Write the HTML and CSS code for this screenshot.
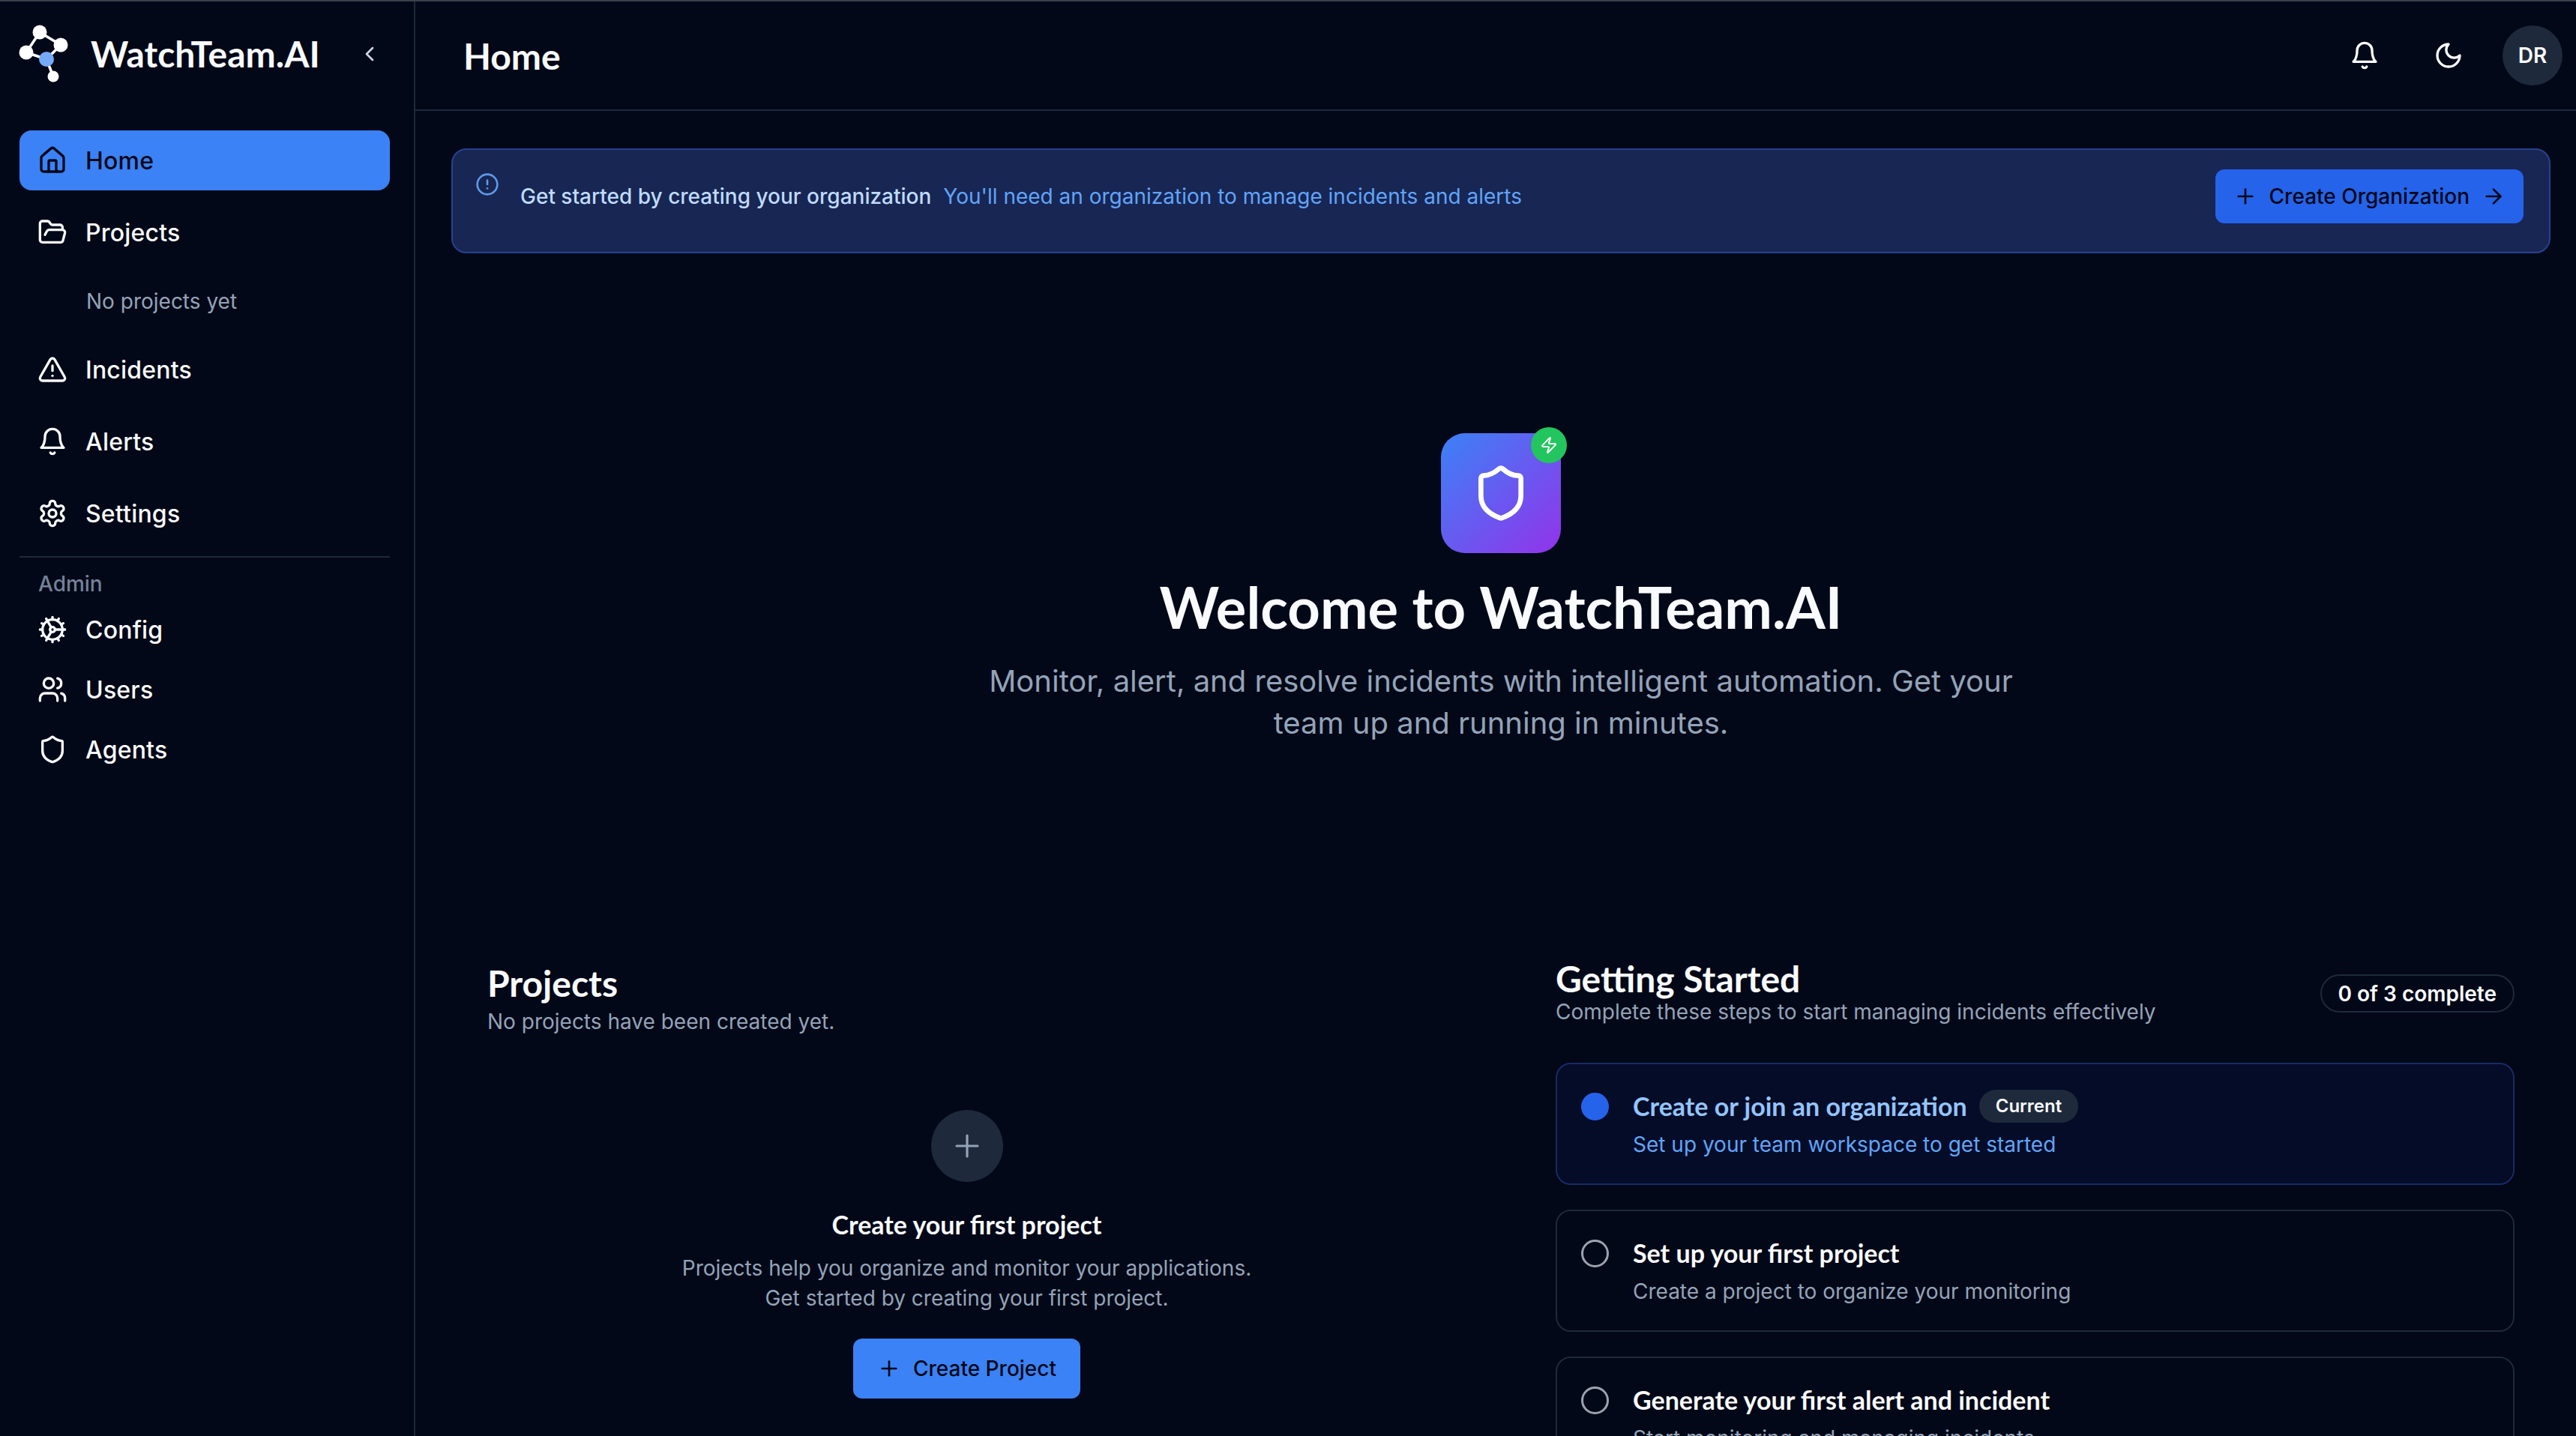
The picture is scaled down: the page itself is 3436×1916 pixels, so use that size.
FILE: index.html
```html
<!DOCTYPE html>
<html lang="en">
<head>
    <meta charset="UTF-8">
    <meta name="viewport" content="width=device-width, initial-scale=1.0">
    <title>WatchTeam.AI</title>
    <link rel="stylesheet" href="styles.css">
</head>
<body>
    <div class="app">
        <aside class="sidebar">
            <div class="brand">
                <svg class="logo" viewBox="0 0 100 130" width="100" height="130">
                    <g stroke="#fff" stroke-width="3.5">
                        <line x1="53" y1="43" x2="81" y2="60"/>
                        <line x1="53" y1="43" x2="35" y2="70"/>
                        <line x1="81" y1="60" x2="62" y2="79"/>
                        <line x1="35" y1="70" x2="62" y2="79"/>
                        <line x1="62" y1="79" x2="71" y2="102"/>
                    </g>
                    <circle cx="53" cy="43" r="9.5" fill="#fff"/>
                    <circle cx="81" cy="60" r="9.5" fill="#fff"/>
                    <circle cx="35" cy="70" r="9.5" fill="#fff"/>
                    <circle cx="71" cy="102" r="7.5" fill="#fff"/>
                    <circle cx="62" cy="79" r="10" fill="#76a9fa"/>
                </svg>
                <span class="brand-name">WatchTeam.AI</span>
                <svg class="icon collapse" viewBox="0 0 24 24"><path d="m15 18-6-6 6-6"/></svg>
            </div>
            <nav class="nav">
                <a class="nav-item active">
                    <svg class="icon" viewBox="0 0 24 24"><path d="M15 21v-8a1 1 0 0 0-1-1h-4a1 1 0 0 0-1 1v8"/><path d="M3 10a2 2 0 0 1 .709-1.528l7-5.999a2 2 0 0 1 2.582 0l7 5.999A2 2 0 0 1 21 10v9a2 2 0 0 1-2 2H5a2 2 0 0 1-2-2z"/></svg>
                    Home
                </a>
                <a class="nav-item">
                    <svg class="icon" viewBox="0 0 24 24"><path d="m6 14 1.5-2.9A2 2 0 0 1 9.24 10H20a2 2 0 0 1 1.94 2.5l-1.54 6a2 2 0 0 1-1.95 1.5H4a2 2 0 0 1-2-2V5a2 2 0 0 1 2-2h3.9a2 2 0 0 1 1.69.9l.81 1.2a2 2 0 0 0 1.67.9H18a2 2 0 0 1 2 2v2"/></svg>
                    Projects
                </a>
                <p class="nav-empty">No projects yet</p>
                <a class="nav-item">
                    <svg class="icon" viewBox="0 0 24 24"><path d="m21.73 18-8-14a2 2 0 0 0-3.48 0l-8 14A2 2 0 0 0 4 21h16a2 2 0 0 0 1.73-3"/><path d="M12 9v4"/><path d="M12 17h.01"/></svg>
                    Incidents
                </a>
                <a class="nav-item">
                    <svg class="icon" viewBox="0 0 24 24"><path d="M6 8a6 6 0 0 1 12 0c0 7 3 9 3 9H3s3-2 3-9"/><path d="M10.3 21a1.94 1.94 0 0 0 3.4 0"/></svg>
                    Alerts
                </a>
                <a class="nav-item">
                    <svg class="icon" viewBox="0 0 24 24"><path d="M12.22 2h-.44a2 2 0 0 0-2 2v.18a2 2 0 0 1-1 1.73l-.43.25a2 2 0 0 1-2 0l-.15-.08a2 2 0 0 0-2.73.73l-.22.38a2 2 0 0 0 .73 2.73l.15.1a2 2 0 0 1 1 1.72v.51a2 2 0 0 1-1 1.74l-.15.09a2 2 0 0 0-.73 2.73l.22.38a2 2 0 0 0 2.73.73l.15-.08a2 2 0 0 1 2 0l.43.25a2 2 0 0 1 1 1.73V20a2 2 0 0 0 2 2h.44a2 2 0 0 0 2-2v-.18a2 2 0 0 1 1-1.73l.43-.25a2 2 0 0 1 2 0l.15.08a2 2 0 0 0 2.73-.73l.22-.39a2 2 0 0 0-.73-2.73l-.15-.08a2 2 0 0 1-1-1.74v-.5a2 2 0 0 1 1-1.74l.15-.09a2 2 0 0 0 .73-2.73l-.22-.38a2 2 0 0 0-2.73-.73l-.15.08a2 2 0 0 1-2 0l-.43-.25a2 2 0 0 1-1-1.73V4a2 2 0 0 0-2-2z"/><circle cx="12" cy="12" r="3"/></svg>
                    Settings
                </a>
                <div class="nav-divider"></div>
                <p class="nav-label">Admin</p>
                <a class="nav-item tight">
                    <svg class="icon" viewBox="0 0 24 24"><path d="M12 20a8 8 0 1 0 0-16 8 8 0 0 0 0 16Z"/><path d="M12 14a2 2 0 1 0 0-4 2 2 0 0 0 0 4Z"/><path d="M12 2v2"/><path d="M12 22v-2"/><path d="m17 20.66-1-1.73"/><path d="M11 10.27 7 3.34"/><path d="m20.66 17-1.73-1"/><path d="m3.34 7 1.73 1"/><path d="M14 12h8"/><path d="M2 12h2"/><path d="m20.66 7-1.73 1"/><path d="m3.34 17 1.73-1"/><path d="m17 3.34-1 1.73"/><path d="m11 13.73-4 6.93"/></svg>
                    Config
                </a>
                <a class="nav-item tight">
                    <svg class="icon" viewBox="0 0 24 24"><path d="M16 21v-2a4 4 0 0 0-4-4H6a4 4 0 0 0-4 4v2"/><circle cx="9" cy="7" r="4"/><path d="M22 21v-2a4 4 0 0 0-3-3.87"/><path d="M16 3.13a4 4 0 0 1 0 7.75"/></svg>
                    Users
                </a>
                <a class="nav-item tight">
                    <svg class="icon" viewBox="0 0 24 24"><path d="M20 13c0 5-3.5 7.5-7.66 8.95a1 1 0 0 1-.67-.01C7.5 20.5 4 18 4 13V6a1 1 0 0 1 1-1c2 0 4.5-1.2 6.24-2.72a1.17 1.17 0 0 1 1.52 0C14.51 3.81 17 5 19 5a1 1 0 0 1 1 1z"/></svg>
                    Agents
                </a>
            </nav>
        </aside>

        <div class="content">
            <header class="topbar">
                <h1 class="page-title">Home</h1>
                <div class="topbar-actions">
                    <svg class="icon" viewBox="0 0 24 24"><path d="M6 8a6 6 0 0 1 12 0c0 7 3 9 3 9H3s3-2 3-9"/><path d="M10.3 21a1.94 1.94 0 0 0 3.4 0"/></svg>
                    <svg class="icon" viewBox="0 0 24 24"><path d="M12 3a6 6 0 0 0 9 9 9 9 0 1 1-9-9Z"/></svg>
                    <div class="avatar">DR</div>
                </div>
            </header>

            <main class="page">
                <div class="banner">
                    <svg class="icon banner-icon" viewBox="0 0 24 24"><circle cx="12" cy="12" r="10"/><line x1="12" y1="8" x2="12" y2="12"/><line x1="12" y1="16" x2="12.01" y2="16"/></svg>
                    <p class="banner-text"><strong>Get started by creating your organization</strong><span>You'll need an organization to manage incidents and alerts</span></p>
                    <button class="btn btn-org">
                        <svg class="icon small" viewBox="0 0 24 24"><path d="M5 12h14"/><path d="M12 5v14"/></svg>
                        Create Organization
                        <svg class="icon small" viewBox="0 0 24 24"><path d="M5 12h14"/><path d="m12 5 7 7-7 7"/></svg>
                    </button>
                </div>

                <section class="hero">
                    <div class="hero-tile">
                        <svg class="icon hero-shield" viewBox="0 0 24 24"><path d="M20 13c0 5-3.5 7.5-7.66 8.95a1 1 0 0 1-.67-.01C7.5 20.5 4 18 4 13V6a1 1 0 0 1 1-1c2 0 4.5-1.2 6.24-2.72a1.17 1.17 0 0 1 1.52 0C14.51 3.81 17 5 19 5a1 1 0 0 1 1 1z"/></svg>
                        <span class="hero-badge">
                            <svg class="icon hero-zap" viewBox="0 0 24 24"><path d="M4 14a1 1 0 0 1-.78-1.63l9.9-10.2a.5.5 0 0 1 .86.46l-1.92 6.02A1 1 0 0 0 13 10h7a1 1 0 0 1 .78 1.63l-9.9 10.2a.5.5 0 0 1-.86-.46l1.92-6.02A1 1 0 0 0 11 14z"/></svg>
                        </span>
                    </div>
                    <h2 class="hero-title">Welcome to WatchTeam.AI</h2>
                    <p class="hero-sub">Monitor, alert, and resolve incidents with intelligent automation. Get your team up and running in minutes.</p>
                </section>

                <div class="columns">
                    <section class="projects">
                        <h3 class="section-title">Projects</h3>
                        <p class="section-sub">No projects have been created yet.</p>
                        <div class="empty">
                            <div class="empty-circle">
                                <svg class="icon small" viewBox="0 0 24 24"><path d="M5 12h14"/><path d="M12 5v14"/></svg>
                            </div>
                            <h4 class="empty-title">Create your first project</h4>
                            <p class="empty-text">Projects help you organize and monitor your applications. Get started by creating your first project.</p>
                            <button class="btn btn-project">
                                <svg class="icon small" viewBox="0 0 24 24"><path d="M5 12h14"/><path d="M12 5v14"/></svg>
                                Create Project
                            </button>
                        </div>
                    </section>

                    <section class="steps">
                        <div class="steps-head">
                            <div>
                                <h3 class="section-title">Getting Started</h3>
                                <p class="section-sub">Complete these steps to start managing incidents effectively</p>
                            </div>
                            <span class="progress">0 of 3 complete</span>
                        </div>
                        <div class="step current">
                            <span class="radio"></span>
                            <div>
                                <div class="step-title">Create or join an organization <span class="tag">Current</span></div>
                                <p class="step-sub">Set up your team workspace to get started</p>
                            </div>
                        </div>
                        <div class="step">
                            <span class="radio"></span>
                            <div>
                                <div class="step-title">Set up your first project</div>
                                <p class="step-sub">Create a project to organize your monitoring</p>
                            </div>
                        </div>
                        <div class="step">
                            <span class="radio"></span>
                            <div>
                                <div class="step-title">Generate your first alert and incident</div>
                                <p class="step-sub">Start monitoring and managing incidents</p>
                            </div>
                        </div>
                    </section>
                </div>
            </main>
        </div>
    </div>
</body>
</html>
```
FILE: styles.css
```css
*{
    margin: 0;
    padding: 0;
    box-sizing: border-box;
}
html, body{
    height: 100%;
    overflow: hidden;
}
body{
    background-color: #020817;
    color: #f8fafc;
    font-family: "Inter", sans-serif;
}
.app{
    display: flex;
    height: 100vh;
    border-top: 2px solid #3b4149;
}
.icon{
    width: 40px;
    height: 40px;
    flex: none;
    fill: none;
    stroke: currentColor;
    stroke-width: 2;
    stroke-linecap: round;
    stroke-linejoin: round;
}
.icon.small{
    width: 32px;
    height: 32px;
}

/* sidebar */
.sidebar{
    width: 554px;
    flex: none;
    border-right: 2px solid #1e293b;
    padding: 0 32px 0 26px;
}
.brand{
    height: 172px;
    display: flex;
    align-items: flex-start;
    margin-left: -26px;
    margin-right: -32px;
}
.logo{
    flex: none;
    margin-top: -2px;
    width: 100px;
}
.brand-name{
    font-family: "Lato", sans-serif;
    font-weight: 700;
    font-size: 48px;
    line-height: 60px;
    margin-top: 40px;
    margin-left: 21px;
    color: #f8fafc;
}
.collapse{
    width: 32px;
    height: 32px;
    margin-top: 54px;
    margin-left: 50px;
    color: #cbd5e1;
}
.nav{
    display: flex;
    flex-direction: column;
}
.nav-item{
    height: 80px;
    display: flex;
    align-items: center;
    gap: 24px;
    padding-left: 24px;
    margin-bottom: 16px;
    border-radius: 16px;
    font-size: 32px;
    font-weight: 500;
    letter-spacing: 0.2px;
}
.nav-item.active{
    background-color: #3b82f6;
    color: #020817;
}
.nav-item.tight{
    margin-bottom: 0;
}
.nav-empty{
    font-size: 28px;
    line-height: 40px;
    color: #94a3b8;
    padding-left: 89px;
    margin: 16px 0 31px;
}
.nav-divider{
    height: 2px;
    background-color: #1e293b;
    margin: 1px 0 17px;
}
.nav-label{
    font-size: 28px;
    line-height: 36px;
    font-weight: 500;
    color: #748299;
    padding-left: 25px;
    margin-bottom: 3px;
}

/* top bar */
.content{
    flex: 1;
    min-width: 0;
}
.topbar{
    height: 146px;
    border-bottom: 2px solid #1e293b;
    display: flex;
    align-items: center;
    justify-content: space-between;
    padding: 0 18px 0 64px;
}
.page-title{
    font-family: "Lato", sans-serif;
    font-size: 48px;
    font-weight: 700;
}
.topbar-actions{
    display: flex;
    align-items: center;
    gap: 72px;
}
.topbar-actions .icon:nth-child(2){
    margin-right: -20px;
}
.avatar{
    width: 80px;
    height: 80px;
    border-radius: 50%;
    background-color: #1e293b;
    display: flex;
    align-items: center;
    justify-content: center;
    font-size: 28px;
    font-weight: 600;
}

/* banner */
.page{
    padding: 50px 34px 0 48px;
}
.banner{
    height: 140px;
    display: flex;
    align-items: flex-start;
    background-color: #182653;
    border: 2px solid #27418f;
    border-radius: 20px;
    padding: 26px 34px 0 30px;
}
.banner-icon{
    width: 32px;
    height: 32px;
    color: #5b9ae8;
    margin-top: 4px;
}
.banner-text{
    flex: 1;
    font-size: 28px;
    line-height: 40px;
    margin: 16px 0 0 28px;
}
.banner-text strong{
    font-weight: 500;
    color: #bfdbfe;
    margin-right: 16px;
}
.banner-text span{
    color: #60a5fa;
}
.btn{
    display: inline-flex;
    align-items: center;
    gap: 16px;
    border: none;
    font-family: inherit;
    font-size: 28px;
    font-weight: 500;
    color: #020817;
    border-radius: 12px;
}
.btn-org{
    height: 72px;
    padding: 0 24px;
    background-color: #2563eb;
}
.btn-project{
    height: 80px;
    padding: 0 32px;
    background-color: #3b82f6;
}

/* hero */
.hero{
    display: flex;
    flex-direction: column;
    align-items: center;
    padding-top: 240px;
}
.hero-tile{
    position: relative;
    width: 160px;
    height: 160px;
    border-radius: 32px;
    background: linear-gradient(135deg, #3b82f6, #9333ea);
    display: flex;
    align-items: center;
    justify-content: center;
    color: #fff;
}
.hero-shield{
    width: 80px;
    height: 80px;
}
.hero-badge{
    position: absolute;
    top: -8px;
    right: -8px;
    width: 48px;
    height: 48px;
    border-radius: 50%;
    background-color: #22c55e;
    display: flex;
    align-items: center;
    justify-content: center;
}
.hero-zap{
    width: 24px;
    height: 24px;
}
.hero-title{
    font-family: "Lato", sans-serif;
    font-size: 76px;
    font-weight: 700;
    line-height: 80px;
    margin-top: 32px;
}
.hero-sub{
    width: 1400px;
    text-align: center;
    font-size: 40px;
    line-height: 56px;
    color: #94a3b8;
    margin-top: 31px;
}

/* lower columns */
.columns{
    display: grid;
    grid-template-columns: 1279px 1279px;
    column-gap: 146px;
    padding: 0 48px;
    margin-top: 285px;
}
.section-title{
    font-family: "Lato", sans-serif;
    font-size: 48px;
    line-height: 56px;
    font-weight: 700;
}
.section-sub{
    font-size: 28px;
    line-height: 40px;
    color: #94a3b8;
}
.projects{
    padding-top: 6px;
}
.projects .section-sub{
    margin-top: 3px;
}
.empty{
    display: flex;
    flex-direction: column;
    align-items: center;
    margin-top: 98px;
}
.empty-circle{
    width: 96px;
    height: 96px;
    border-radius: 50%;
    background-color: #1e293b;
    color: #94a3b8;
    display: flex;
    align-items: center;
    justify-content: center;
}
.empty-circle .icon{
    width: 48px;
    height: 48px;
    stroke-width: 1.6;
}
.empty-title{
    font-family: "Lato", sans-serif;
    font-size: 34px;
    line-height: 44px;
    font-weight: 700;
    margin-top: 35px;
}
.empty-text{
    width: 800px;
    text-align: center;
    font-size: 28px;
    line-height: 40px;
    color: #94a3b8;
    margin: 16px 0 34px;
}
.steps-head{
    display: flex;
    justify-content: space-between;
    align-items: flex-start;
    height: 140px;
}
.steps-head .section-sub{
    margin-top: -4px;
}
.progress{
    height: 51px;
    margin-top: 22px;
    padding: 0 22px;
    display: flex;
    align-items: center;
    border: 2px solid #1e293b;
    border-radius: 26px;
    font-size: 28px;
    font-weight: 600;
}
.step{
    display: flex;
    gap: 32px;
    border: 2px solid #1e293b;
    border-radius: 20px;
    padding: 32px;
    margin-bottom: 33px;
    height: 163px;
}
.radio{
    width: 37px;
    height: 37px;
    flex: none;
    margin-top: 6px;
    border-radius: 50%;
    border: 3px solid #9ca3af;
}
.step-title{
    font-family: "Lato", sans-serif;
    font-size: 34px;
    line-height: 48px;
    font-weight: 700;
    display: flex;
    align-items: center;
    gap: 16px;
}
.step-sub{
    font-size: 28px;
    line-height: 40px;
    margin-top: 7px;
    color: #94a3b8;
}
.step.current{
    background-color: #050c27;
    border-color: #1a2a66;
}
.step.current .radio{
    background-color: #2563eb;
    border-color: #2563eb;
}
.step.current .step-title{
    color: #93c5fd;
}
.step.current .step-sub{
    color: #60a5fa;
}
.tag{
    font-family: "Inter", sans-serif;
    font-size: 24px;
    font-weight: 600;
    height: 44px;
    padding: 0 22px;
    margin-left: 0;
    border-radius: 22px;
    background-color: #1e293b;
    color: #f8fafc;
    display: flex;
    align-items: center;
}
```
